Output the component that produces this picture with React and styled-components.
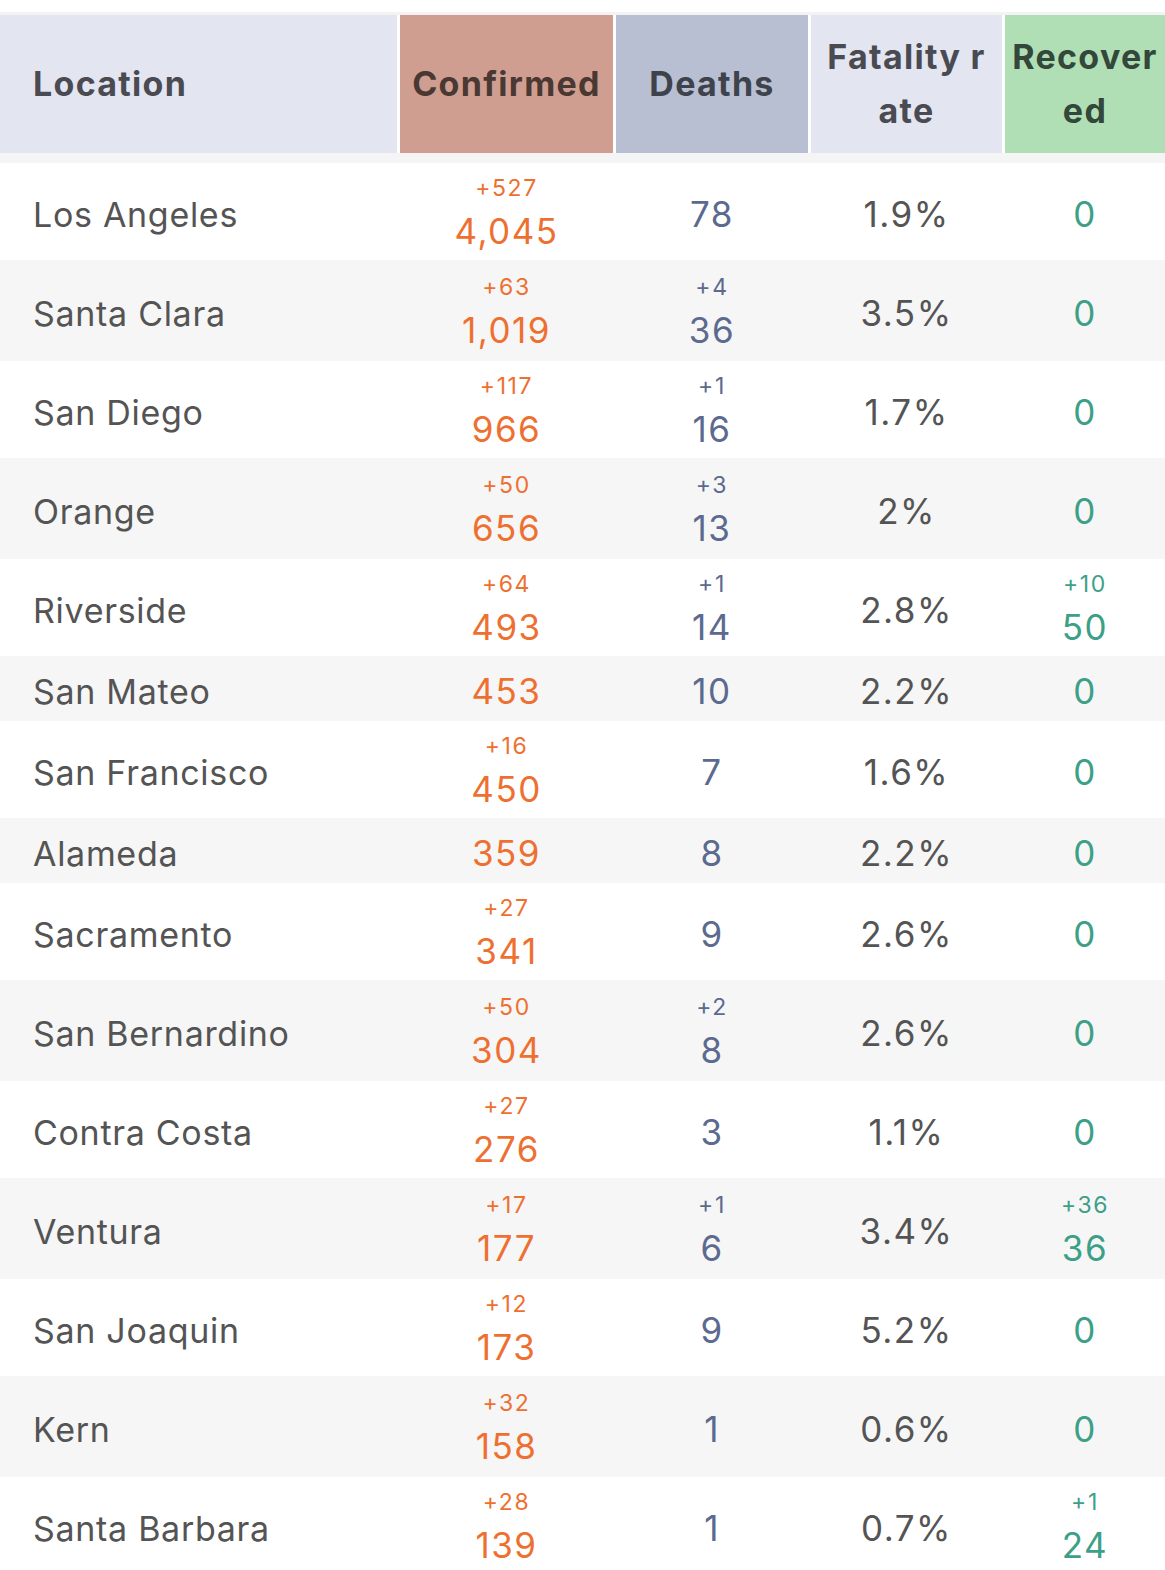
import React from "react";
import styled, { createGlobalStyle } from "styled-components";

const Global = createGlobalStyle`
  html, body { margin: 0; padding: 0; background: #ffffff; }
  body { font-family: "Inter", "Roboto", "Liberation Sans", sans-serif; }
  *, *::before, *::after { box-sizing: border-box; }
`;

const COLS = "397px 213px 192px 191px 1fr";

const Page = styled.div`
  padding-top: 12px;
  width: 1165px;
`;

const Header = styled.div`
  display: grid;
  grid-template-columns: ${COLS};
  column-gap: 3px;
  border-top: 3px solid #f3f3f4;
  border-bottom: 10px solid #f5f5f5;
  height: 151px;
  background: #ffffff;
`;

const HeadCell = styled.div`
  background: ${(p) => p.$bg};
  color: ${(p) => p.$fg};
  display: flex;
  align-items: center;
  justify-content: ${(p) => (p.$left ? "flex-start" : "center")};
  text-align: ${(p) => (p.$left ? "left" : "center")};
  padding-left: ${(p) => (p.$left ? "33px" : "0")};
  font-weight: 700;
  font-size: 34px;
  line-height: 54px;
  letter-spacing: 1.3px;
  white-space: nowrap;
`;

const Row = styled.div`
  display: grid;
  grid-template-columns: ${COLS};
  column-gap: 3px;
  height: ${(p) => (p.$tall ? "99px" : "63px")};
  background: ${(p) => (p.$alt ? "#f6f6f6" : "#ffffff")};
  border-bottom: 2px solid #f6f6f6;
  padding-top: 5px;
`;

const NameCell = styled.div`
  display: flex;
  align-items: center;
  padding-left: 33px;
  font-size: 34px;
  letter-spacing: 0.7px;
  color: #545454;
`;

const NumCell = styled.div`
  display: flex;
  flex-direction: column;
  align-items: center;
  justify-content: center;
  color: ${(p) => p.$color};
`;

const Inc = styled.div`
  font-size: 23px;
  line-height: 34px;
  letter-spacing: 1.6px;
`;

const Value = styled.div`
  font-size: 35px;
  line-height: 52px;
  letter-spacing: 1.5px;
`;

const ORANGE = "#ee7030";
const SLATE = "#5b6a8e";
const GREY = "#545454";
const TEAL = "#3d9f87";

const rows = [
  ["Los Angeles", "4,045", "+527", "78", "", "1.9%", "0", ""],
  ["Santa Clara", "1,019", "+63", "36", "+4", "3.5%", "0", ""],
  ["San Diego", "966", "+117", "16", "+1", "1.7%", "0", ""],
  ["Orange", "656", "+50", "13", "+3", "2%", "0", ""],
  ["Riverside", "493", "+64", "14", "+1", "2.8%", "50", "+10"],
  ["San Mateo", "453", "", "10", "", "2.2%", "0", ""],
  ["San Francisco", "450", "+16", "7", "", "1.6%", "0", ""],
  ["Alameda", "359", "", "8", "", "2.2%", "0", ""],
  ["Sacramento", "341", "+27", "9", "", "2.6%", "0", ""],
  ["San Bernardino", "304", "+50", "8", "+2", "2.6%", "0", ""],
  ["Contra Costa", "276", "+27", "3", "", "1.1%", "0", ""],
  ["Ventura", "177", "+17", "6", "+1", "3.4%", "36", "+36"],
  ["San Joaquin", "173", "+12", "9", "", "5.2%", "0", ""],
  ["Kern", "158", "+32", "1", "", "0.6%", "0", ""],
  ["Santa Barbara", "139", "+28", "1", "", "0.7%", "24", "+1"],
];

function Stat({ value, inc, color }) {
  return (
    <NumCell $color={color}>
      {inc ? <Inc>{inc}</Inc> : null}
      <Value>{value}</Value>
    </NumCell>
  );
}

export default function App() {
  return (
    <Page>
      <Global />
      <Header>
        <HeadCell $bg="#e3e5f1" $fg="#4a4a52" $left>Location</HeadCell>
        <HeadCell $bg="#d09e90" $fg="#4a3833">Confirmed</HeadCell>
        <HeadCell $bg="#b8bfd2" $fg="#3e424b">Deaths</HeadCell>
        <HeadCell $bg="#e3e5f1" $fg="#4a4a52">
          Fatality r<br />ate
        </HeadCell>
        <HeadCell $bg="#b0dfb5" $fg="#33473a">
          Recover<br />ed
        </HeadCell>
      </Header>
      {rows.map((r, i) => {
        const tall = Boolean(r[2] || r[4] || r[7]);
        return (
          <Row key={r[0]} $tall={tall} $alt={i % 2 === 1}>
            <NameCell>{r[0]}</NameCell>
            <Stat value={r[1]} inc={r[2]} color={ORANGE} />
            <Stat value={r[3]} inc={r[4]} color={SLATE} />
            <Stat value={r[5]} color={GREY} />
            <Stat value={r[6]} inc={r[7]} color={TEAL} />
          </Row>
        );
      })}
    </Page>
  );
}
